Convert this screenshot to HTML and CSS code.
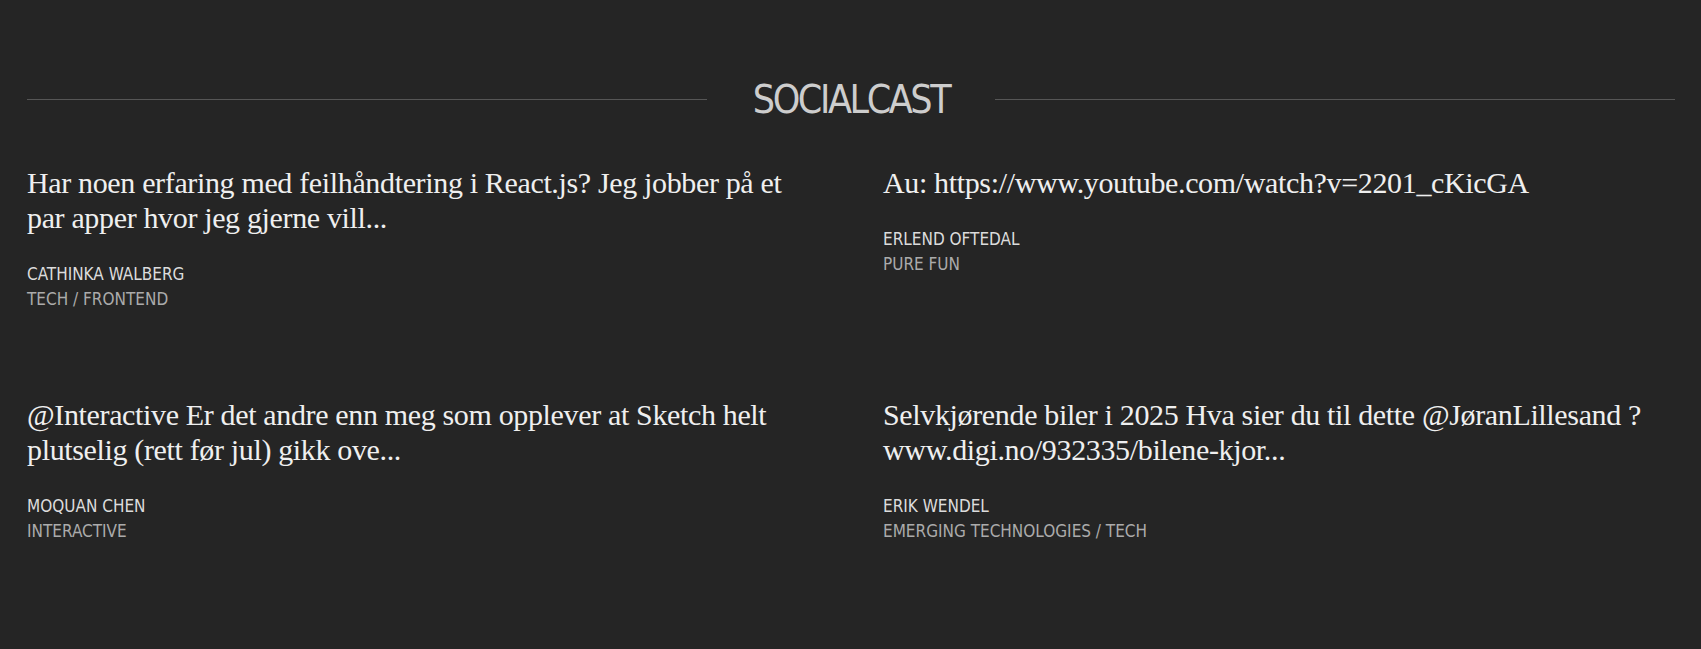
FILE: index.html
```html
<!DOCTYPE html>
<html lang="no">
<head>
<meta charset="utf-8">
<title>Socialcast</title>
<link rel="stylesheet" href="styles.css">
</head>
<body>
<section class="socialcast">
  <header class="heading">
    <span class="rule"></span>
    <h2 class="heading-title">SOCIALCAST</h2>
    <span class="rule"></span>
  </header>
  <div class="posts">
    <article class="post">
      <p class="post-text">Har noen erfaring med feilhåndtering i React.js? Jeg jobber på et par apper hvor jeg gjerne vill...</p>
      <div class="post-meta">
        <div class="post-author">CATHINKA WALBERG</div>
        <div class="post-group">TECH / FRONTEND</div>
      </div>
    </article>
    <article class="post">
      <p class="post-text">Au: https://www.youtube.com/watch?v=2201_cKicGA</p>
      <div class="post-meta">
        <div class="post-author">ERLEND OFTEDAL</div>
        <div class="post-group">PURE FUN</div>
      </div>
    </article>
    <article class="post">
      <p class="post-text">@Interactive Er det andre enn meg som opplever at Sketch helt plutselig (rett før jul) gikk ove...</p>
      <div class="post-meta">
        <div class="post-author">MOQUAN CHEN</div>
        <div class="post-group">INTERACTIVE</div>
      </div>
    </article>
    <article class="post">
      <p class="post-text">Selvkjørende biler i 2025 Hva sier du til dette @JøranLillesand ? www.digi.no/932335/bilene-kjor...</p>
      <div class="post-meta">
        <div class="post-author">ERIK WENDEL</div>
        <div class="post-group">EMERGING TECHNOLOGIES / TECH</div>
      </div>
    </article>
  </div>
</section>
</body>
</html>
```

FILE: styles.css
```css
html, body {
  margin: 0;
  padding: 0;
  background: #252525;
}

body {
  font-family: "Liberation Serif", "DejaVu Serif", serif;
  color: #ececec;
}

.socialcast {
  padding: 75px 26px 0 27px;
}

.heading {
  display: flex;
  align-items: center;
}

.rule {
  flex: 1;
  height: 1px;
  background: #565656;
}

.heading-title {
  margin: 0 46px;
  padding-top: 2px;
  font-family: "DejaVu Sans Condensed", "Liberation Sans Narrow", "Liberation Sans", sans-serif;
  font-stretch: condensed;
  font-weight: normal;
  font-size: 39px;
  line-height: 46px;
  letter-spacing: -2.4px;
  color: #cdcdcd;
}

.posts {
  display: grid;
  grid-template-columns: 1fr 1fr;
  column-gap: 64px;
  row-gap: 85px;
  margin-top: 42px;
}

.post-text {
  margin: 0;
  font-size: 30px;
  line-height: 35px;
  letter-spacing: -0.35px;
  color: #efefef;
}

.post-meta {
  margin-top: 27px;
  font-family: "DejaVu Sans Condensed", "Liberation Sans Narrow", "Liberation Sans", sans-serif;
  font-stretch: condensed;
  font-size: 17px;
  line-height: 25px;
}

.post-author {
  color: #dcdcdc;
}

.post-group {
  color: #ababab;
}
```
